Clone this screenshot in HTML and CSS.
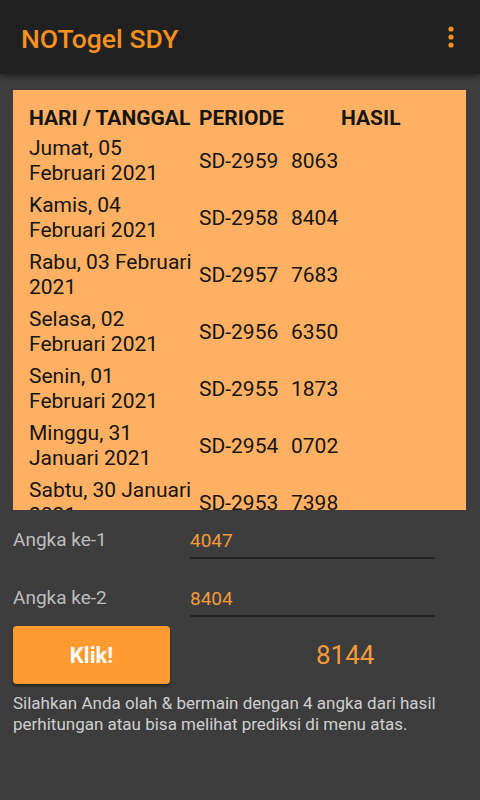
FILE: index.html
```html
<!DOCTYPE html>
<html lang="id">
<head>
    <meta charset="UTF-8">
    <meta name="viewport" content="width=device-width, initial-scale=1.0">
    <link rel="stylesheet" href="styles.css">
    <title>NOTogel SDY</title>
</head>
<body>

    <div class="appbar">
        <h1 class="title">NOTogel SDY</h1>
        <div class="menu">
            <svg width="8" height="24" viewBox="0 0 8 24">
                <circle cx="4" cy="4" r="2.6" fill="#f7901e"/>
                <circle cx="4" cy="12" r="2.6" fill="#f7901e"/>
                <circle cx="4" cy="20" r="2.6" fill="#f7901e"/>
            </svg>
        </div>
    </div>

    <div class="content">
        <div class="panel">
            <div class="head">
                <span class="h-date">HARI / TANGGAL</span>
                <span class="h-per">PERIODE</span>
                <span class="h-res">HASIL</span>
            </div>
            <!-- hasil keluaran terakhir -->
            <div class="row"><span class="date">Jumat, 05 Februari 2021</span><span class="per">SD-2959</span><span class="res">8063</span></div>
            <div class="row"><span class="date">Kamis, 04 Februari 2021</span><span class="per">SD-2958</span><span class="res">8404</span></div>
            <div class="row"><span class="date">Rabu, 03 Februari 2021</span><span class="per">SD-2957</span><span class="res">7683</span></div>
            <div class="row"><span class="date">Selasa, 02 Februari 2021</span><span class="per">SD-2956</span><span class="res">6350</span></div>
            <div class="row"><span class="date">Senin, 01 Februari 2021</span><span class="per">SD-2955</span><span class="res">1873</span></div>
            <div class="row"><span class="date">Minggu, 31 Januari 2021</span><span class="per">SD-2954</span><span class="res">0702</span></div>
            <div class="row"><span class="date">Sabtu, 30 Januari 2021</span><span class="per">SD-2953</span><span class="res">7398</span></div>
        </div>

        <div class="field">
            <label class="label">Angka ke-1</label>
            <div class="input">4047</div>
        </div>
        <div class="field">
            <label class="label">Angka ke-2</label>
            <div class="input">8404</div>
        </div>

        <div class="action">
            <button class="btn">Klik!</button>
            <div class="result">8144</div>
        </div>

        <p class="note">Silahkan Anda olah &amp; bermain dengan 4 angka dari hasil perhitungan atau bisa melihat prediksi di menu atas.</p>
    </div>

</body>
</html>
```

FILE: styles.css
```css
body {
    margin: 0;
    font-family: Roboto, 'Noto Sans', sans-serif;
    background-color: #3d3d3d;
    width: 480px;
    height: 800px;
    overflow: hidden;
}
.appbar {
    height: 74px;
    background-color: #212121;
    display: flex;
    align-items: center;
    justify-content: space-between;
    padding: 0 25px 0 21px;
    box-shadow: 0 2px 6px rgba(0, 0, 0, 0.5);
    position: relative;
}
.title {
    margin: 2px 0 0;
    font-size: 26.5px;
    font-weight: 500;
    color: #f7901e;
}
.menu {
    display: flex;
    align-items: center;
}
.content {
    padding: 16px 14px 0 13px;
}
.panel {
    background-color: #ffb062;
    height: 420px;
    overflow: hidden;
    padding: 0 16px;
    color: #151515;
    font-size: 21px;
}
.head {
    display: flex;
    font-weight: bold;
    line-height: 25px;
    padding-top: 16px;
    padding-bottom: 5px;
}
.h-date {
    width: 170px;
}
.h-per {
    width: 142px;
}
.row {
    display: flex;
    align-items: center;
    line-height: 25px;
    padding: 0 0 7px;
}
.date {
    width: 165px;
    margin-right: 5px;
}
.per {
    width: 92px;
}
.field {
    display: flex;
    align-items: center;
    height: 58px;
}
.label {
    width: 177px;
    font-size: 19px;
    color: #bdbdbd;
}
.input {
    width: 245px;
    font-size: 19px;
    color: #f39a3a;
    padding-top: 5px;
    padding-bottom: 5px;
    border-bottom: 2px solid #232323;
    margin-top: 4px;
}
.action {
    display: flex;
    align-items: center;
}
.btn {
    width: 157px;
    height: 58px;
    border: none;
    border-radius: 4px;
    background-color: #ff9a30;
    color: #fff;
    font-family: Roboto, sans-serif;
    font-size: 22px;
    font-weight: bold;
    box-shadow: 0 2px 3px rgba(0, 0, 0, 0.4);
}
.result {
    margin-left: 146px;
    font-size: 26px;
    color: #f39a3a;
}
.note {
    margin: 9px 0 0;
    font-size: 17px;
    line-height: 21px;
    color: #cfcfcf;
}
```
